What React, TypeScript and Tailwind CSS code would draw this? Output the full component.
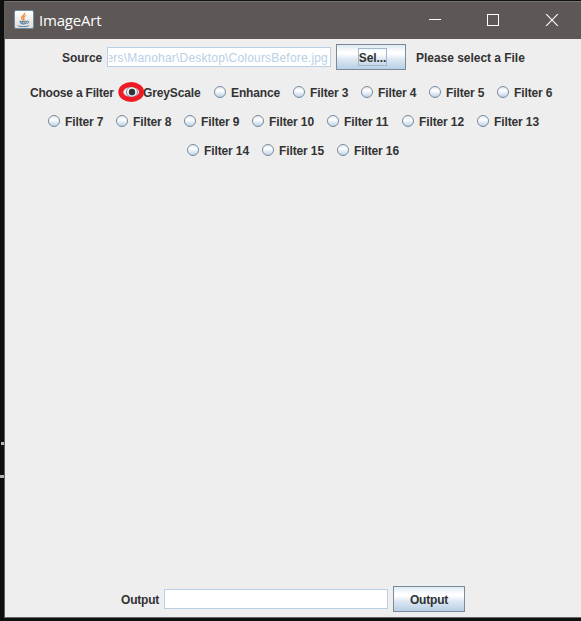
import React from 'react';

const label = "font-['Liberation_Sans',Arial,sans-serif] text-[12px] leading-[14px] font-bold whitespace-pre text-[#333333]";
const metal = 'border border-[#7a8a99] bg-[linear-gradient(180deg,#dfe9f3_0%,#ffffff_30%,#ffffff_36%,#dce7f2_60%,#b8cfe5_100%)]';

function Radio({ text, width, selected = false }: { text: string; width: string; selected?: boolean }) {
  return (
    <label className={`flex shrink-0 items-center ${width}`}>
      <span className="relative mr-[5px] h-3 w-3 shrink-0">
        <svg className="block" width="12" height="12" viewBox="0 0 12 12">
          <defs>
            <linearGradient id="radioFill" x1="0" y1="0" x2="0" y2="1">
              <stop offset="0" stopColor="#dde8f3" />
              <stop offset="0.38" stopColor="#ffffff" />
              <stop offset="1" stopColor="#b8cfe5" />
            </linearGradient>
          </defs>
          <circle cx="6" cy="6" r="5.5" fill="url(#radioFill)" stroke="#7a8a99" />
          {selected && <circle cx="6" cy="6" r="3.2" fill="#333" />}
        </svg>
        {selected && (
          <svg className="absolute -top-[5px] -left-[8px]" width="28" height="22" viewBox="0 0 28 22">
            <ellipse cx="13.2" cy="11" rx="10.4" ry="7.4" fill="none" stroke="#ed1c24" strokeWidth="5" />
          </svg>
        )}
      </span>
      <span className={`${label} pt-0.5 tracking-[-0.12px]`}>{text}</span>
    </label>
  );
}

function JavaIcon() {
  return (
    <svg width="20" height="20" viewBox="0 0 20 20" fill="none">
      <defs>
        <linearGradient id="tile" x1="0" y1="0" x2="0" y2="1">
          <stop offset="0" stopColor="#ffffff" />
          <stop offset="1" stopColor="#dcdcdc" />
        </linearGradient>
      </defs>
      <rect x="0.5" y="0.5" width="19" height="18" rx="1.5" fill="url(#tile)" stroke="#6f8ea5" />
      <path d="M10.5 3c1 2-3.2 3-3 5 .1 1 1.4 1.7 1.7 2.5M11.8 5.5c-2.5 1.2-2.8 2-2 3 .6.8.3 1.4-.2 2" stroke="#ed8b3b" strokeWidth="1.3" />
      <path d="M5.5 11.1c1.5.6 6 .6 7.5 0M6.2 12.2c.1 2.5 6 2.5 6.3 0M13 11.2c2.8-.5 2.4 2-.5 2.5M4.3 15.3c-1.2 1.7 9.5 1.9 10.5.1" stroke="#507a99" strokeWidth="1" />
      <path d="M6.5 13h5.5" stroke="#507a99" />
    </svg>
  );
}

export default function App() {
  return (
    <div className="relative flex h-[621px] w-[581px] flex-col overflow-hidden bg-[#0e0f0f] pt-px pl-1">
      <div className="absolute top-[442px] left-px h-[3px] w-[3px] bg-[#b4b4b4]" />
      <div className="absolute top-[475px] left-0 h-[3px] w-1 bg-[#b4b4b4]" />
      <div className="flex h-[617px] w-[577px] flex-col border-b border-l border-b-[#686a68] border-l-[#655e58] bg-[#eeeeee]">
        <header className="flex h-[38px] shrink-0 items-center border-t border-[#77716d] bg-[#5d5855] pb-px pl-[9px]">
          <JavaIcon />
          <h1 className="ml-[5px] font-['Open_Sans','Noto_Sans',sans-serif] text-[15px] leading-5 tracking-[-0.2px] text-white">ImageArt</h1>
          <svg className="mr-[22px] ml-auto" width="130" height="14" viewBox="0 0 130 14" fill="none" stroke="#fff">
            <path d="M0 6.5h12" />
            <rect x="58.5" y="1.5" width="11" height="11" />
            <path d="M117.2 1.2l11.6 11.6m0-11.6L117.2 12.8" strokeWidth="1.1" />
          </svg>
        </header>
        <section className="flex h-[36px] shrink-0 items-center pl-[57px]">
          <span className={`${label} w-[45px] pt-0.5 tracking-[-0.1px]`}>Source</span>
          <div className="flex h-5 w-[224px] items-center justify-end overflow-hidden border border-[#b8cfe5] bg-white px-px">
            <div className="flex w-[220px] justify-end overflow-hidden pt-0.5 pr-px">
              <span className="font-['Liberation_Sans',Arial,sans-serif] text-[12px] leading-[14px] tracking-[0.2px] whitespace-pre text-[#b8cfe5]">ers\Manohar\Desktop\ColoursBefore.jpg</span>
            </div>
          </div>
          <button className={`ml-[5px] flex h-[26px] w-[70px] items-center justify-center pl-[3px] ${metal}`}>
            <span className={`${label} flex h-[18px] w-[29px] items-center justify-center border border-[#a3b8cc] pt-px tracking-[-0.1px]`}>Sel...</span>
          </button>
          <span className={`${label} ml-[10px] pt-0.5 tracking-[-0.03px]`}>Please select a File</span>
        </section>
        <section className="flex flex-col">
          <div className="flex h-[34px] items-center pl-[25px]">
            <span className={`${label} w-24 shrink-0 pt-0.5 tracking-[-0.2px]`}>Choose a Filter</span>
            <Radio text="GreyScale" width="w-[88px]" selected />
            <Radio text="Enhance" width="w-[79px]" />
            <Radio text="Filter 3" width="w-[68px]" />
            <Radio text="Filter 4" width="w-[68px]" />
            <Radio text="Filter 5" width="w-[68px]" />
            <Radio text="Filter 6" width="w-[68px]" />
          </div>
          <div className="flex h-[24px] items-center pl-[43px]">
            <Radio text="Filter 7" width="w-[68px]" />
            <Radio text="Filter 8" width="w-[68px]" />
            <Radio text="Filter 9" width="w-[68px]" />
            <Radio text="Filter 10" width="w-[75px]" />
            <Radio text="Filter 11" width="w-[75px]" />
            <Radio text="Filter 12" width="w-[75px]" />
            <Radio text="Filter 13" width="w-[75px]" />
          </div>
          <div className="flex h-[34px] items-center pl-[182px]">
            <Radio text="Filter 14" width="w-[75px]" />
            <Radio text="Filter 15" width="w-[75px]" />
            <Radio text="Filter 16" width="w-[75px]" />
          </div>
        </section>
        <footer className="mt-auto flex h-[36px] items-center pl-[116px]">
          <span className={`${label} w-[43px] pt-0.5 tracking-[-0.2px]`}>Output</span>
          <div className="h-5 w-[224px] border border-[#b8cfe5] bg-white" />
          <button className={`ml-[5px] flex h-[26px] w-[72px] items-center justify-center ${metal}`}>
            <span className={`${label} pt-0.5 tracking-[-0.2px]`}>Output</span>
          </button>
        </footer>
      </div>
    </div>
  );
}
